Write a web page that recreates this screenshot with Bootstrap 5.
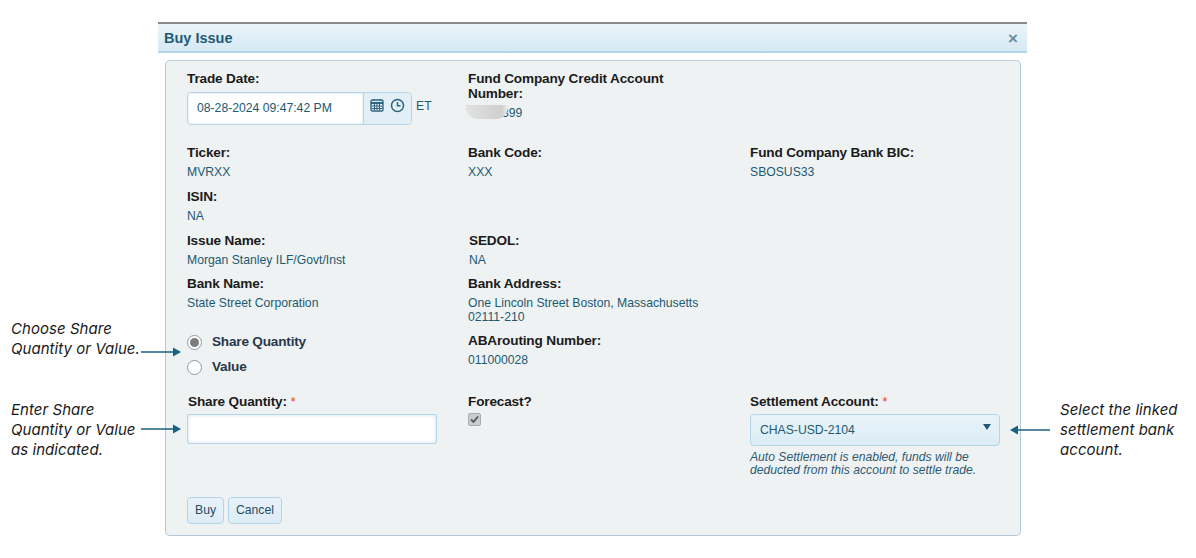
<!DOCTYPE html>
<html lang="en">
<head>
<meta charset="utf-8">
<title>Buy Issue</title>
<link href="https://cdn.jsdelivr.net/npm/bootstrap@5.3.0/dist/css/bootstrap.min.css" rel="stylesheet">
<style>
html,body{height:558px;overflow:hidden;background:#fff}
body{font-family:"Liberation Sans",Arial,sans-serif;position:relative;padding:22px 169px 0 158px}
.dlg{width:869px;border-top:2px solid #8a8a8a}
.dlg-head{height:29px;background:linear-gradient(#eaf4f9,#d6e9f4);border-bottom:2px solid #b4d5e8;color:#1f5a78;font-weight:700;font-size:14.5px;padding:2px 9px 0 6px}
.dlg-x{color:#6b8ea3;font-size:17px;font-weight:700;line-height:1}
.pane{margin:7px 6px 0 7px;height:476px;background:#eff2f3;border:1px solid #b3c7d6;border-top-color:#b8ccdb;border-radius:5px;padding:10px 0 0 21px}
.frow{display:grid;grid-template-columns:281px 282px 260px}
.r1{height:74px}.r2{height:44px}.r3{height:44px}.r4{height:43px}.r5{height:53px}.r6{height:65px}.r7{height:103px}
.flabel{font-weight:700;font-size:13.6px;line-height:15px;color:#1b1b1b;letter-spacing:-.16px}
.fval{font-size:12.2px;line-height:14px;color:#1c5a72;margin-top:5px}
.req{color:#e8403a;font-weight:400}
.nudge{padding-left:1px}
.dt{display:flex;width:225px;height:33px;margin-top:6px;border:1px solid #b4d5e8;border-radius:4px;overflow:hidden}
.dt-in{width:176px;background:#fff;border-right:1px solid #b4d5e8;box-shadow:inset 0 0 3px #cfe0ea;font-size:12.2px;color:#1c5a72;padding-left:9px;line-height:31px}
.dt-btn{flex:1;background:#e2eff6;display:flex;align-items:flex-start;gap:6px;padding:5px 0 0 6px}
.et{font-size:12.2px;color:#1c5a72;margin:6px 0 0 4px;line-height:28px}
.rad{display:flex;align-items:center;height:25px;font-weight:700;font-size:13.6px;letter-spacing:-.2px;color:#27384a}
.rad-dot{width:15px;height:15px;border:1px solid #8f9ba3;border-radius:50%;background:#fff;margin-right:10px;display:flex;align-items:center;justify-content:center;flex:none}
.rad-dot i{width:9px;height:9px;border-radius:50%;background:#7c7c7c;display:block}
.pad1{padding-top:1px}
.pad4{padding-top:4px}
.qty{width:250px;height:30px;background:#fff;border:1px solid #b4d5e8;border-radius:2px;box-shadow:inset 0 0 4px #d5e3ec;margin-top:5px}
.chk{width:13px;height:13px;margin-top:4px;background:#c9ccce;border:1px solid #a9adb0;border-radius:2px;display:flex;align-items:center;justify-content:center}
.sel{position:relative;width:250px;height:32px;margin-top:5px;background:linear-gradient(#e8f3f9,#dcecf5);border:1px solid #b4d5e8;border-radius:4px;font-size:12.2px;color:#1c5a72;line-height:31px;padding-left:9px}
.sel::after{content:"";position:absolute;right:8px;top:9px;border:4px solid transparent;border-top:6px solid #1f5a78;border-bottom:0}
.hint{font-style:italic;font-size:12.15px;line-height:13px;color:#2e5a72;margin-top:5px;white-space:nowrap}
.mybtn{height:27px;padding:0 7px;background:linear-gradient(#e8f3f9,#dcecf5);border:1px solid #b4d5e8;border-radius:4px;font-size:12.2px;color:#1f4c66;line-height:24px}
.blur-mask{display:inline-block;position:relative;z-index:1;width:42px;height:14px;background:linear-gradient(90deg,#e2e2e2,#cfcfcf 85%,#eff2f3);border-radius:0 0 12px 12px;margin:-1px -6px 0 -2px}
.note{position:absolute;font-family:"Inter","Noto Sans",sans-serif;font-style:italic;font-size:15px;letter-spacing:.05px;line-height:20px;color:#1a1a1a;white-space:nowrap}
.n1{left:11px;top:319px}.n2{left:11px;top:400px}.n3{left:1060px;top:400px}
.arr{position:absolute}
.a1{left:141px;top:346px}.a2{left:141px;top:423px}.a3{left:1009px;top:424px}
</style>
</head>
<body>
<div class="dlg">
  <div class="dlg-head d-flex align-items-center justify-content-between"><span>Buy Issue</span><span class="dlg-x">×</span></div>
  <div class="pane">
    <div class="frow r1">
      <div>
        <div class="flabel">Trade Date:</div>
        <div class="d-flex">
          <div class="dt">
            <div class="dt-in">08-28-2024 09:47:42 PM</div>
            <div class="dt-btn">
              <svg width="14" height="14" viewBox="0 0 14 14" fill="none" stroke="#2f6480"><rect x="1" y="2" width="12" height="11" rx="1.5" stroke-width="1.4"/><path d="M1 5h12" stroke-width="2"/><path d="M4 1v2M10 1v2M4.5 6v6M7 6v6M9.5 6v6M2 8h10M2 10.500h10" stroke-width="1"/></svg>
              <svg width="15" height="15" viewBox="0 0 15 15" fill="none" stroke="#2f6480" stroke-width="1.500"><circle cx="7.500" cy="7.500" r="6"/><path d="M7.500 4v3.800h3"/></svg>
            </div>
          </div>
          <div class="et">ET</div>
        </div>
      </div>
      <div>
        <div class="flabel">Fund Company Credit Account<br>Number:</div>
        <div class="fval d-flex"><span class="blur-mask"></span>399</div>
      </div>
      <div></div>
    </div>
    <div class="frow r2">
      <div><div class="flabel">Ticker:</div><div class="fval">MVRXX</div></div>
      <div><div class="flabel">Bank Code:</div><div class="fval">XXX</div></div>
      <div><div class="flabel">Fund Company Bank BIC:</div><div class="fval">SBOSUS33</div></div>
    </div>
    <div class="frow r3">
      <div><div class="flabel">ISIN:</div><div class="fval">NA</div></div><div></div><div></div>
    </div>
    <div class="frow r4">
      <div><div class="flabel">Issue Name:</div><div class="fval">Morgan Stanley ILF/Govt/Inst</div></div>
      <div class="nudge"><div class="flabel">SEDOL:</div><div class="fval">NA</div></div><div></div>
    </div>
    <div class="frow r5">
      <div><div class="flabel">Bank Name:</div><div class="fval">State Street Corporation</div></div>
      <div><div class="flabel">Bank Address:</div><div class="fval">One Lincoln Street Boston, Massachusetts<br>02111-210</div></div><div></div>
    </div>
    <div class="frow r6">
      <div class="pad1">
        <div class="rad"><span class="rad-dot"><i></i></span>Share Quantity</div>
        <div class="rad"><span class="rad-dot"></span>Value</div>
      </div>
      <div><div class="flabel pad4">ABArouting Number:</div><div class="fval">011000028</div></div><div></div>
    </div>
    <div class="frow r7">
      <div><div class="flabel nudge">Share Quantity: <span class="req">*</span></div><div class="qty"></div></div>
      <div><div class="flabel">Forecast?</div>
        <div class="chk"><svg width="9" height="9" viewBox="0 0 9 9" fill="none" stroke="#555" stroke-width="1.800"><path d="M1 4.500l2.500 2.500L8 1.500"/></svg></div>
      </div>
      <div><div class="flabel">Settlement Account: <span class="req">*</span></div>
        <div class="sel">CHAS-USD-2104</div>
        <div class="hint">Auto Settlement is enabled, funds will be<br>deducted from this account to settle trade.</div>
      </div>
    </div>
    <div class="d-flex gap-1"><div class="mybtn">Buy</div><div class="mybtn">Cancel</div></div>
  </div>
</div>
<div class="note n1">Choose Share<br>Quantity or Value.</div>
<div class="note n2">Enter Share<br>Quantity or Value<br>as indicated.</div>
<div class="note n3">Select the linked<br>settlement bank<br>account.</div>
<svg class="arr a1" width="41" height="12" viewBox="0 0 41 12"><path d="M0 6h34" stroke="#1b5f82" stroke-width="1.500"/><path d="M32 1.500l8 4.500-8 4.500z" fill="#1b5f82"/></svg>
<svg class="arr a2" width="41" height="12" viewBox="0 0 41 12"><path d="M0 6h34" stroke="#1b5f82" stroke-width="1.500"/><path d="M32 1.500l8 4.500-8 4.500z" fill="#1b5f82"/></svg>
<svg class="arr a3" width="41" height="12" viewBox="0 0 41 12"><path d="M41 6h-34" stroke="#1b5f82" stroke-width="1.500"/><path d="M9 1.500l-8 4.500 8 4.500z" fill="#1b5f82"/></svg>
<script src="https://cdn.jsdelivr.net/npm/bootstrap@5.3.0/dist/js/bootstrap.bundle.min.js"></script>
</body>
</html>
